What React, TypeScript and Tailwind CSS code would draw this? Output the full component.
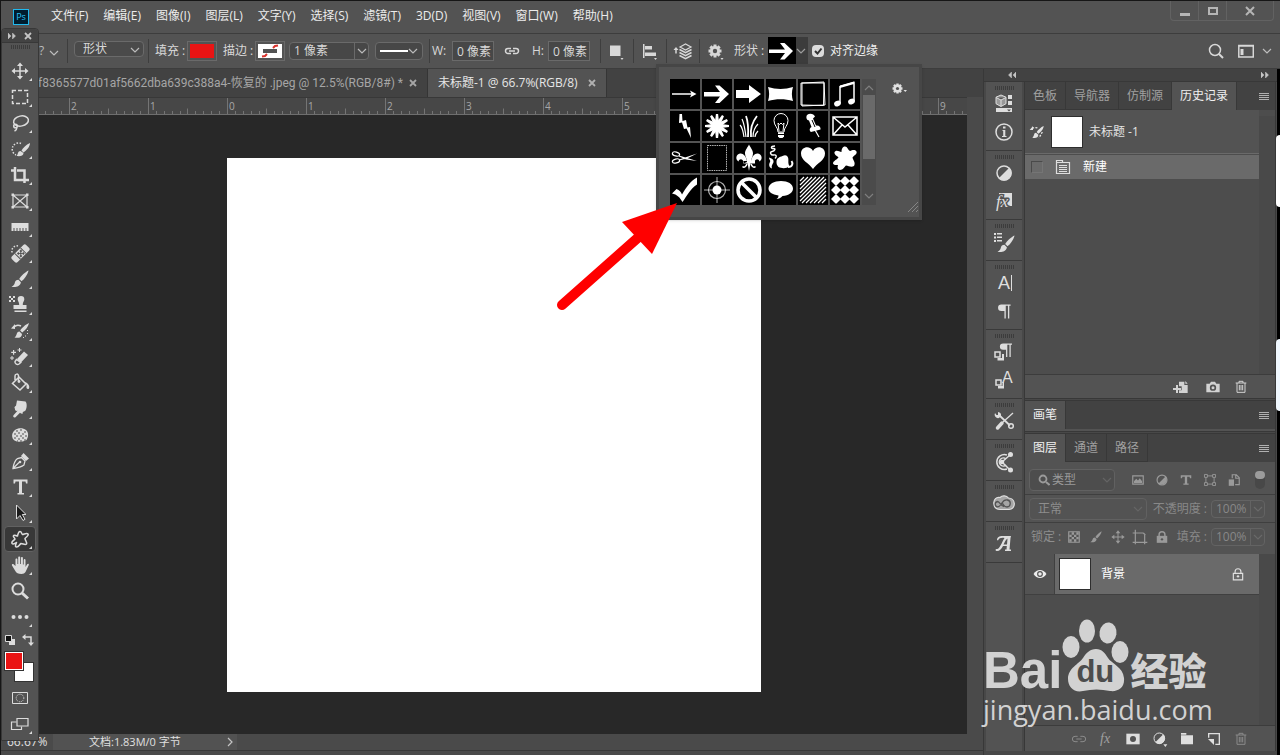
import { useState } from "react";
import type { ReactNode } from "react";

type IconProps = {
  children: ReactNode;
  size?: string;
  box?: string;
  className?: string;
};

const Icon = ({ children, size = "w-6 h-6", box = "0 0 24 24", className = "" }: IconProps) => (
  <svg viewBox={box} className={`${size} shrink-0 ${className}`} fill="currentColor" stroke="none" aria-hidden="true">
    {children}
  </svg>
);

const line = { fill: "none", stroke: "currentColor", strokeWidth: 1.5 };

const Chevron = ({ className = "" }: { className?: string }) => (
  <Icon size="w-2.5 h-2.5" box="0 0 10 10" className={className}>
    <path d="M1 3l4 4 4-4" {...line} strokeWidth={1.2} opacity=".8" />
  </Icon>
);

const Brush = () => (
  <>
    <path d="M20.500 3.500c-3 1.200-7.500 5.500-9.300 8.500l2.300 2.300c3-2.300 6.500-7.300 7-10.800z" />
    <path d="M10.400 12.800c-2 0-3.200 1.200-3.600 3-.3 1.600-1.300 3-3.300 4 3.500.6 8.800.2 9.400-4.500z" />
  </>
);

const Pilcrow = () => <path d="M9 4h11v1.500h-1.500V20H17V5.500h-2.500V20H13v-8.500H9.500a3.700 3.700 0 010-7.500z" />;

const Trash = () => <path d="M4 6h16M9 6V3.500h6V6M6 6v14h12V6M9.500 9v8M12 9v8M14.500 9v8" {...line} />;

const MENUS = [
  "文件(F)",
  "编辑(E)",
  "图像(I)",
  "图层(L)",
  "文字(Y)",
  "选择(S)",
  "滤镜(T)",
  "3D(D)",
  "视图(V)",
  "窗口(W)",
  "帮助(H)",
];

const TOOLS: { name: string; icon: ReactNode; plain?: boolean }[] = [
  {
    name: "Move",
    icon: (
      <>
        <path d="M12 6v12M6 12h12" {...line} />
        <path d="M12 3.500l3 3.500H9zM12 20.500l3-3.500H9zM3.500 12L7 9v6zM20.500 12L17 9v6z" />
      </>
    ),
  },
  { name: "Marquee", icon: <path d="M4.500 6v-.500h15v13h-15z" {...line} strokeDasharray="4 2" /> },
  {
    name: "Lasso",
    icon: (
      <>
        <ellipse cx="13" cy="10" rx="7.500" ry="5" {...line} transform="rotate(-12 13 10)" />
        <circle cx="7.500" cy="15" r="1.800" {...line} />
        <path d="M8.500 16.500c.5 1.500-.5 3-2 3.500" {...line} />
      </>
    ),
  },
  {
    name: "Quick selection",
    icon: (
      <>
        <path d="M13 6.500A6 6 0 108 18" {...line} strokeDasharray="1.500 1.500" />
        <path d="M22 6c-4 1.500-7 5-8.500 7.500l2 2C19 13 22 9.500 22 6zM12.500 14c-3 0-2 3-4 5 3.500.5 7 0 7-3z" />
      </>
    ),
  },
  { name: "Crop", icon: <path d="M7 4v13h11M3 7.500h3M9 7.500h7.500V20M18 17h3" {...line} strokeWidth={2.5} /> },
  {
    name: "Frame",
    icon: (
      <>
        <path d="M5 6h14v12H5zM5 6l14 12M19 6L5 18" {...line} strokeWidth={1.200} />
        <path d="M3.500 4.500h2.500V7H3.500zM18 4.500h2.500V7H18zM3.500 17h2.500v2.500H3.500zM18 17h2.500v2.500H18z" />
      </>
    ),
  },
  { name: "Ruler", icon: <path d="M3.500 8h17v8h-2v-3h-1v3h-2v-3h-1v3h-2v-3h-1v3h-2v-3h-1v3h-2v-3h-1v3h-2z" /> },
  {
    name: "Spot healing",
    icon: (
      <>
        <path d="M10 5a5 5 0 00-6 6v2" {...line} strokeDasharray="1.500 1.500" />
        <g transform="rotate(-45 12.500 12.500)">
          <rect x="2.500" y="8.500" width="20" height="8" rx="2" />
          <path d="M8.500 8.500v8M16.500 8.500v8" stroke="#535353" />
          <path d="M10 10h2v2h-2zM13.500 10h2v2h-2zM11.700 11.700h2v2h-2zM10 13.500h2v2h-2zM13.500 13.500h2v2h-2z" fill="#535353" />
        </g>
      </>
    ),
  },
  { name: "Brush", icon: <Brush /> },
  {
    name: "Clone stamp",
    icon: (
      <>
        <path d="M1 3h2v2H1zM5 3h2v2H5zM3 5h2v2H3zM1 7h2v2H1zM5 7h2v2H5z" />
        <path d="M13 3a3.300 3.300 0 013.300 3.300c0 2-1.500 2.500-1.500 5.700h3.700v4h-13v-4h5.700c0-3.200-1.500-3.700-1.500-5.700A3.300 3.300 0 0113 3zM6.500 17.500h12V19h-12z" />
      </>
    ),
  },
  {
    name: "History brush",
    icon: (
      <>
        <path d="M21 4c-3.500 1.500-7.300 5-8.800 7.500l2 2C17.500 11 20.500 7.500 21 4zM11.500 12.500c-3.500 0-2 4-5 6 4 1 7.500 0 7.500-3.500z" />
        <path d="M6 8c2-2 5-2 7-1" {...line} />
        <path d="M3 9.500L7 5v5zM19 11h1v1h-1zM19 14h1v1h-1zM17 16.500h1v1h-1zM15 18h1v1h-1z" />
      </>
    ),
  },
  {
    name: "Eraser",
    icon: (
      <>
        <path d="M9 14l7-7.500 4 3.500-7.500 8z" />
        <path d="M8.500 14.500l-1.500 2c-.5 2.500 2.500 3.500 4 2.500l1.700-1.500z" {...line} />
        <path d="M5 5h1.200v1.800H8V8H6.200v1.800H5V8H3.200V6.800H5zM11 3h1v1.500h1.500v1H12V7h-1V5.500H9.500v-1H11zM3.500 11h1v1.500H6v1H4.500V15h-1v-1.500H2v-1h1.500z" />
      </>
    ),
  },
  {
    name: "Paint bucket",
    icon: (
      <>
        <path d="M11 6l7 7-6 6-7.500-6.500zM10.500 10V5c0-3-3.500-2-3.500 0v4" {...line} />
        <circle cx="11" cy="10.500" r="1.400" />
        <path d="M17 11c3.500 1 5 4.500 4 6.500-1.500 1.500-3-.5-2.500-2 .4-1.500-.5-3-1.500-4.500z" />
      </>
    ),
  },
  {
    name: "Smudge",
    icon: (
      <path d="M9 3.500l8.500 1c1.500 1.500 1.700 6 0 9-1 1-2 .8-3 1.800 1.500 1.500-1 2-2.500.5l-4.500 4.500c-1.500 1-3-.5-2-2l4-4.500c-1.500.5-3-.5-2.500-2-1.300-1 0-2.500 1-3z" />
    ),
  },
  {
    name: "Sponge",
    icon: (
      <>
        <path d="M7 7c3-2.500 8-2.500 11 0s2.500 7 .5 10c-3 2-9 2.500-12 .500s-3.500-7.500.5-10.500z" />
        <path d="M8 8h2M12 7h2M16 9h2M6 11h2M10 10h2M14 11h2M8 13h2M12 13h2M17 13h2M6 15h2M10 16h2M14 15h2M16 17h2M9 18h1M12 18h2" {...line} stroke="#535353" strokeWidth={1} />
      </>
    ),
  },
  {
    name: "Pen",
    icon: (
      <>
        <path d="M5 19.500c.5-4 2-8 4.500-10l4-1 3.500 3.500-1 4c-2.500 2-7 3-11 3.500zM5 19.500l6-6" {...line} strokeWidth={1.300} />
        <circle cx="12" cy="13" r="1.300" />
        <path d="M13 7l2.500-3 5.500 5.500-3 2.500z" />
      </>
    ),
  },
  { name: "Type", icon: <path d="M5.500 4.500h14v4H18l-.5-2h-3.500v11.500h2V19.500H9.500V18H11V6.500H7.500l-.5 2H5.500z" /> },
  { name: "Path selection", icon: <path d="M8.500 4v14l3.500-3.500 3 5 2-1.200-2.700-4.800H18z" fill="#1b1b1b" stroke="currentColor" strokeWidth="1" /> },
  {
    name: "Custom shape",
    icon: (
      <path
        d="M9.500 9c.5-2 .8-4.500 2.500-4.500S13.500 7 14.500 7.500c1.500 0 4-2 5.500-.5 1.200 1.500-2 3-3 4.500 0 2 2.300 3.500 1.500 5.500-1.500 1.500-3.500-.5-5.500-.5-1.500.8-2 3.500-4.500 3.500-2 0-.5-3 0-4.500-.8 0-3 2.500-4.500 1-1-2 2-3 3-4.500-.5-1.500-2.300-2-1.500-3.500 1-1 2.500.5 4 .5z"
        {...line}
        strokeLinejoin="round"
      />
    ),
  },
  {
    name: "Hand",
    icon: (
      <path d="M7.500 13V6.500c0-1.300 1.900-1.300 1.900 0V11h.8V4.500c0-1.300 2-1.300 2 0V11h.8V5c0-1.300 1.900-1.300 1.900 0v6.500h.8V7c0-1.200 1.800-1.200 1.800 0v7l1.500-2.500c1-1.300 2.300-.5 1.700.8L17.500 19c-.8 1.300-2 2-4 2-3.500 0-5-.8-6.500-3.500L4 12.500c-.6-1.300.8-2 1.800-1z" />
    ),
  },
  {
    name: "Zoom",
    plain: true,
    icon: (
      <>
        <circle cx="10" cy="10" r="5.500" {...line} strokeWidth={2} />
        <path d="M14 14l6 5.500" {...line} strokeWidth={3} />
      </>
    ),
  },
  {
    name: "More tools",
    icon: (
      <>
        <circle cx="5.500" cy="12" r="2" />
        <circle cx="12" cy="12" r="2" />
        <circle cx="18.500" cy="12" r="2" />
      </>
    ),
  },
];

const w = { fill: "none", stroke: "#fff", strokeWidth: 1.5 };
const BURST = [0, 30, 60, 90, 120, 150, 180, 210, 240, 270, 300, 330];

// Custom shape presets, each drawn on a 30x30 cell
const SHAPES: { name: string; icon: ReactNode }[] = [
  {
    name: "Arrow 1",
    icon: (
      <>
        <path d="M2 15h20" {...w} />
        <path d="M20 11.500l6.500 3.500-6.500 3.500 1.500-3.500z" />
      </>
    ),
  },
  { name: "Arrow 2", icon: <path d="M2 13h16l-5-6.500h4.500L27 15l-9.500 9H13l5-6.500H2z" /> },
  { name: "Arrow 3", icon: <path d="M2 11h13V6l12 9-12 9v-5H2z" /> },
  { name: "Banner", icon: <path d="M2 8c8 2.500 17 2.500 25 0-1.500 4.500-1.500 9.500 0 14-8-2.500-17-2.500-25 0 1.500-4.500 1.500-9.500 0-14z" /> },
  { name: "Frame", icon: <path d="M4 4l22-1 1 23-23 1zM3 4h23l-.5 22.500L3 26z" {...w} strokeWidth={1} /> },
  {
    name: "Music",
    icon: (
      <>
        <path d="M10 24V7.500L24 3.500V22" {...w} />
        <path d="M10 6.500l14-4v2.500l-14 4z" />
        <ellipse cx="7.500" cy="24.500" rx="3.500" ry="2.700" transform="rotate(-25 7.500 24.500)" />
        <ellipse cx="21.500" cy="22.500" rx="3.500" ry="2.700" transform="rotate(-25 21.500 22.500)" />
      </>
    ),
  },
  { name: "Lightning", icon: <path d="M9.500 3l2.500 0 .5 7 3.500-1 1.500 7.500 2.500-.5 1 11-4.500-9.500-2.500.5-2-6.500-3 .5z" /> },
  {
    name: "Starburst",
    icon: (
      <>
        <circle cx="15" cy="15" r="5.500" />
        {BURST.map((a) => (
          <path key={a} d="M13 11L13.900 3h2.200l.9 8z" transform={`rotate(${a} 15 15)`} />
        ))}
      </>
    ),
  },
  {
    name: "Grass",
    icon: (
      <>
        <path d="M12 26C11 18 10 12 8 8M10 26c-1-7-2-10-4-12M19 26c0-6 2-10 5-13M21 26c0-3 1-4 3-6" {...w} strokeWidth={1.200} />
        <path d="M14 26c.5-9-.5-17-2-21M17 26c-1-9 2-16 6-21" {...w} strokeWidth={1.800} />
      </>
    ),
  },
  {
    name: "Light bulb",
    icon: (
      <>
        <path d="M12 21c0-5-4-6-4-11.500a7 7 0 0114 0C22 15 18 16 18 21zM13 20l-1-8 1.500 1.500L15 12l1.500 1.500L18 12l-1 8" {...w} strokeWidth={1} />
        <path d="M12 21.500h6v4l-1.500 1.500h-3L12 25.500z" />
        <path d="M12 23.500h6" stroke="#000" />
      </>
    ),
  },
  {
    name: "Push pin",
    icon: (
      <>
        <path d="M9 4c3-2.500 7-1 8 1.500l-2 2 3 7c3-.5 5 1.500 4.500 4L13 21c-2-1.500-1.500-4 .500-5L11 9.500c-2 0-3.500-3-2-5.500z" />
        <path d="M17 19l4 7" {...w} strokeWidth={1.200} />
        <path d="M14 9l3 7" stroke="#000" />
      </>
    ),
  },
  { name: "Envelope", icon: <path d="M3 6h24v18H3zM3 6l12 10L27 6M3 24l9-10M27 24l-9-10" {...w} /> },
  {
    name: "Scissors",
    icon: (
      <>
        <ellipse cx="6" cy="11" rx="3.700" ry="2" {...w} strokeWidth={1.200} transform="rotate(15 6 11)" />
        <ellipse cx="6" cy="18" rx="3.700" ry="2" {...w} strokeWidth={1.200} transform="rotate(-15 6 18)" />
        <path d="M9 12.500l18 5.500-11-1.500-7-3zM9 16.500L27 10.500l-10 5-8 2z" />
      </>
    ),
  },
  { name: "Stamp", icon: <path d="M5.500 2.500h19v25h-19z" {...w} strokeWidth={1} strokeDasharray="1.500 .8" opacity=".7" /> },
  {
    name: "Fleur-de-lis",
    icon: (
      <>
        <path d="M15 1.500c2 4 4 5.500 4 9 0 3-2 5-2 8h-4c0-3-2-5-2-8 0-3.500 2-5 4-9z" />
        <path d="M13 19c0-4-3-9-7-8.500-4 .5-5 6-1.500 8 .5-2 2.500-3 4-1.500 1 1 1 2 1 3.500zM17 19c0-4 3-9 7-8.500 4 .5 5 6 1.500 8-.5-2-2.500-3-4-1.500-1 1-1 2-1 3.500zM9 18h12v2.500H9zM13.500 20h3l-1.500 8z" />
        <path d="M13 21c-1 3-3 4-4.500 2.500M17 21c1 3 3 4 4.500 2.500" {...w} />
      </>
    ),
  },
  {
    name: "Ornament",
    icon: (
      <>
        <path d="M10.500 19c0-4 3-5 6-6 2.500-1.500 4.500-1 5.500 1.500 1 3-.5 5.500 1.500 8.500-3 3-8 2.500-11 1-1.500-1.500-2-3-2-5z" />
        <path d="M9 3C4 3 5 6 7.500 5.500S9 8 6 8.500s-1 4 1.500 3.500 4 1 1.500 3.500" {...w} strokeWidth={1.400} />
        <path d="M22 24c5 0 5-4 3.500-6" {...w} strokeWidth={2} />
        <path d="M3 14.500c3 1 5 2 4.500 4.500-.3 2-2.500 3-1.500 6.500-3-1-3.500-4-2-6.500 1-1.500-1-2.500-1-4.500z" />
      </>
    ),
  },
  { name: "Heart", icon: <path d="M15 26C11 20 3 17.500 3 10.500 3 3.500 12 2 15 8c3-6 12-4.500 12 2.500 0 7-8 9.500-12 15.500z" /> },
  {
    name: "Blob",
    icon: (
      <path d="M11.500 9c0-3 1-5.500 3.500-5.500S18 7 20 8c2-.5 4.500-2 6.500.5 1 3-2.500 3.500-4 6 .5 3 3.500 5 1.500 8.500-3 2-5.500-.5-8-.500-1.500 1.500-3 4.500-6 4.500-3-.5-2.500-3-2-5-2 0-4 .5-5-1.500C3 18 6.500 17 8.500 14.500 7 12.500 4 12 4.500 9c2-2.500 4.500-.5 7 0z" />
    ),
  },
  { name: "Checkmark", icon: <path d="M2 18.500l4.500-4.500c3 1 4.500 3 5.500 5.500C16 13 20 6 27 2.500v7C20 14 17 21 12.500 27 10 22.500 7 19.500 2 18.500z" /> },
  {
    name: "Target",
    icon: (
      <>
        <circle cx="15" cy="15" r="8.500" {...w} strokeWidth={1.200} opacity=".7" />
        <circle cx="15" cy="15" r="4.500" />
        <path d="M15 2v26M2 15h26" {...w} strokeWidth={1} opacity=".7" />
      </>
    ),
  },
  {
    name: "No symbol",
    icon: (
      <>
        <circle cx="15" cy="15" r="11" {...w} strokeWidth={3.500} />
        <path d="M7.500 7.500l15 15" {...w} strokeWidth={3.500} />
      </>
    ),
  },
  { name: "Talk bubble", icon: <path d="M15 6c7 0 12 3 12 7.500 0 4-4 7-10.500 7.500-1.500 2-4 3-6 3 1.500-1 2-2 2-3.500C6 19.500 2.500 17 2.500 13.500 2.500 9 8 6 15 6z" /> },
  {
    name: "Diagonal lines",
    icon: (
      <path d="M2 6l4-4M2 10l8-8M2 14L14 2M2 18L18 2M2 22L22 2M2 26L26 2M4 28L28 4M8 28L28 8M12 28l16-16M16 28l12-12M20 28l8-8M24 28l4-4" {...w} strokeWidth={1.200} />
    ),
  },
  {
    name: "Diamond tiles",
    icon: (
      <>
        {[6, 15, 24].map((y) =>
          [6, 15, 24].map((x) => (
            <path key={`${x}-${y}`} d="M-4.500-.5L-.5-4.500h1L4.500-.5v1L.5 4.500h-1L-4.500.5z" transform={`translate(${x} ${y})`} />
          ))
        )}
      </>
    ),
  },
];

const DOCK: { name: string; icon: ReactNode }[][] = [
  [
    {
      name: "Libraries",
      icon: (
        <>
          <path d="M9 3l5 2.200v6.500L9 14.500l-5-2.800V5.200zM4 5.500l5 2.500 5-2.500M9 8v6" fill="#999" stroke="currentColor" strokeWidth="1" />
          <path d="M16 3h4v4h-4zM16 9h4v4h-4zM4 16h16v4H4z" />
          <path d="M15 17.500h4l-2 2z" fill="#535353" />
        </>
      ),
    },
    {
      name: "Info",
      icon: (
        <>
          <circle cx="12" cy="12" r="8" {...line} />
          <path d="M10.500 10h2.800v6h1.200v1h-4.500v-1h1.200v-5h-.7zM11 6.500h2.500v2H11z" />
        </>
      ),
    },
  ],
  [
    {
      name: "Adjustments",
      icon: (
        <>
          <circle cx="12" cy="12" r="7" {...line} />
          <path d="M17.500 6.500a7.700 7.700 0 01-11 11z" />
        </>
      ),
    },
    {
      name: "Styles",
      icon: (
        <>
          <path d="M7 4h13v13H7z" />
          <text
            x="4"
            y="18"
            fontSize="17"
            fontStyle="italic"
            fontFamily="Liberation Serif, serif"
            stroke="#535353"
            strokeWidth="3"
            paintOrder="stroke"
          >
            fx
          </text>
        </>
      ),
    },
  ],
  [
    {
      name: "Brush settings",
      icon: (
        <>
          <path d="M2 3h2v2H2zM5 3h5v1.500H5zM2 6.500h2v2H2zM5 6.500h5V8H5zM2 10h2v2H2zM5 10h5v1.500H5z" />
          <g transform="translate(2 2)">
            <Brush />
          </g>
        </>
      ),
    },
  ],
  [
    {
      name: "Character",
      icon: (
        <>
          <text x="6" y="18" fontSize="18" fontFamily="Liberation Sans, sans-serif">
            A
          </text>
          <path d="M19.500 4v16" {...line} strokeWidth={1} />
        </>
      ),
    },
    {
      name: "Paragraph",
      icon: (
        <g transform="translate(1 2) scale(.88)">
          <Pilcrow />
        </g>
      ),
    },
  ],
  [
    {
      name: "Paragraph styles",
      icon: (
        <>
          <g transform="translate(3 0) scale(.85)">
            <Pilcrow />
          </g>
          <path d="M3 12h5v5H3z" {...line} />
          <path d="M10 14h2v6.500H5.500V18H10z" />
        </>
      ),
    },
    {
      name: "Character styles",
      icon: (
        <>
          <text x="10" y="15" fontSize="16" fontFamily="Liberation Sans, sans-serif">
            A
          </text>
          <path d="M4 12h5v5H4z" {...line} />
          <path d="M10.500 14h1.500v6.500H6V18h4.500z" />
        </>
      ),
    },
  ],
  [
    {
      name: "Tool presets",
      icon: (
        <>
          <path d="M8 7l10 9.500" {...line} strokeWidth={1.800} />
          <path d="M21 4l-10 9" {...line} strokeWidth={1.300} />
          <path d="M10 14L5.500 19" {...line} strokeWidth={3.500} strokeLinecap="round" />
          <path d="M3 4a3.500 3.500 0 004 5l2-2a3.500 3.500 0 00-3-4v3L4.500 6z" />
          <circle cx="19" cy="17" r="2.300" {...line} />
        </>
      ),
    },
  ],
  [
    {
      name: "3D",
      icon: (
        <>
          <path d="M15 5a7.500 7.500 0 100 14M14 9a4 4 0 100 6" {...line} />
          <path d="M10 12l8-7M10 12l8 8" {...line} />
          <circle cx="10" cy="12" r="2.300" />
          <circle cx="18.500" cy="4.500" r="2.500" />
          <circle cx="18.500" cy="20" r="2.500" />
        </>
      ),
    },
  ],
  [
    {
      name: "Creative Cloud",
      icon: (
        <>
          <path d="M8 6.500C4.500 5.500 1.500 8.500 1.800 12.500c.3 4 3 6 6.200 6h9c3.500 0 5.500-3 5.300-6-.3-3.500-3-5.500-5.800-5.500C14.500 4.500 10.500 4 8 6.500z" fill="#a5a5a5" stroke="currentColor" strokeWidth="1.200" />
          <path d="M12 15.500c-3 0-4-5-6.500-5-3 .5-3 5 0 5.300 2.500 0 3-1.800 4.500-3.800 1.500-2.500 3.500-3.500 5.500-3 4 1 3.500 6.700-.5 7-2.500 0-3-1.500-4.500-3.500" fill="none" stroke="#535353" strokeWidth="1.300" />
        </>
      ),
    },
  ],
  [
    {
      name: "Glyphs",
      icon: (
        <path d="M5 8c0-3 3-4.300 6-4h8l-.5 2-1 11.500H19V19h-6v-1.500h1.500l.3-3.500H11c-1.500 3-3.500 5.300-6.500 5-1.800-.7-.8-2.500.5-2 2.500.3 4.500-6 7.500-11C9.500 5.500 7 6 6 8.500zM11.500 12.500h3.500l.5-6c-2 1.500-3 4-4 6z" />
      ),
    },
  ],
];

const Divider = () => <div className="w-px h-6 bg-[#3e3e3e] shrink-0" />;

const Grip = () => (
  <div className="flex justify-center gap-px">
    {Array.from({ length: 10 }, (_, i) => (
      <span key={i} className="w-px h-1 bg-[#3c3c3c]" />
    ))}
  </div>
);

const PanelMenu = ({ label }: { label: string }) => (
  <button aria-label={label} className="ml-auto mr-1.5 flex flex-col gap-px self-center">
    {[0, 1, 2, 3].map((i) => (
      <span key={i} className="w-2.5 h-px bg-[#b0b0b0]" />
    ))}
  </button>
);

function MenuBar() {
  return (
    <header className="h-8 flex items-center pl-3 shrink-0">
      <div className="w-4 h-4 border border-[#21b9ee] bg-[#001d2e] text-[#2cc3f5] text-[9px] leading-3.5 text-center">Ps</div>
      <nav className="flex gap-[15px] ml-[22px] -mt-0.5 text-[#ececec]">
        {MENUS.map((m) => (
          <button key={m}>{m}</button>
        ))}
      </nav>
      <div className="ml-auto mr-1.5 self-start flex border border-t-0 border-[#626262] rounded-b h-5 text-[#b5b5b5] divide-x divide-[#626262]">
        <button aria-label="Minimize" className="w-7 flex items-center justify-center">
          <span className="w-2.5 h-[3px] mt-2 bg-[#b5b5b5]" />
        </button>
        <button aria-label="Maximize" className="w-7 flex items-center justify-center">
          <span className="w-2.5 h-2 border-2 border-[#b5b5b5]" />
        </button>
        <button aria-label="Close" className="w-11.5 flex items-center justify-center">
          <Icon size="w-3 h-3" box="0 0 12 12">
            <path d="M2 2l8 8M10 2l-8 8" {...line} strokeWidth={2} />
          </Icon>
        </button>
      </div>
    </header>
  );
}

function OptionsBar() {
  const [mode, setMode] = useState("形状");
  const [align, setAlign] = useState(true);

  return (
    <div className="h-9 flex items-center pl-[38px] border-y border-[#3d3d3d] shrink-0 text-[#d8d8d8] whitespace-nowrap">
      <span className="w-2 text-[#bbb]">?</span>
      <Chevron className="ml-0.5 mr-2 mt-1" />
      <Divider />
      <div className="relative ml-1.5 mr-1 w-17.5 -mt-1">
        <select
          aria-label="Tool mode"
          value={mode}
          onChange={(e) => setMode(e.target.value)}
          className="appearance-none w-full h-4 pl-2 leading-3.5 border border-[#6a6a6a] rounded-sm bg-[#4a4a4a]"
        >
          <option>形状</option>
          <option>路径</option>
          <option>像素</option>
        </select>
        <Chevron className="absolute right-1 top-1 pointer-events-none" />
      </div>
      <Divider />
      <span className="ml-1.5 w-8">填充 :</span>
      <button aria-label="填充" className="w-7.5 h-5 border border-[#6a6a6a] p-0.5">
        <span className="block w-full h-full bg-[#ea1414]" />
      </button>
      <span className="ml-1.5 w-8">描边 :</span>
      <button aria-label="描边" className="w-7.5 h-5 border border-[#6a6a6a] p-0.5">
        <Icon size="w-6 h-3.5" box="0 0 24 14">
          <path d="M0 0h24v14H0z" fill="#fff" />
          <path d="M4 12.500l3-.5 2-2M15 4l2-2 3-.5" fill="none" stroke="#d9322c" strokeWidth="2" />
          <path d="M5 5h14v4H5z" fill="#535353" />
        </Icon>
      </button>
      <div className="ml-1 flex h-4.5 border border-[#6a6a6a] rounded-sm bg-[#474747]">
        <input aria-label="描边宽度" defaultValue="1 像素" className="w-16 pl-1 outline-none" />
        <button aria-label="Stroke presets" className="w-3.5 border-l border-[#6a6a6a] flex items-center justify-center">
          <Chevron />
        </button>
      </div>
      <button aria-label="Stroke type" className="mx-1.5 w-12 h-4.5 px-1 border border-[#6a6a6a] rounded-sm bg-[#474747] flex items-center justify-between">
        <span className="w-7 h-0.5 bg-white" />
        <Chevron />
      </button>
      <Divider />
      <label className="flex items-center ml-0.5">
        <span className="w-5">W:</span>
        <input defaultValue="0 像素" className="w-10.5 h-5 pl-1 border border-[#6a6a6a] bg-[#474747] outline-none" />
      </label>
      <button aria-label="Link dimensions" className="ml-2.5 mr-3">
        <Icon size="w-4 h-4" box="0 0 16 16">
          <path d="M7 5.500H4a2.500 2.500 0 000 5h3M9 5.500h3a2.500 2.500 0 010 5H9M5 8h6" {...line} />
        </Icon>
      </button>
      <label className="flex items-center">
        <span className="w-4">H:</span>
        <input defaultValue="0 像素" className="w-10.5 h-5 pl-1 border border-[#6a6a6a] bg-[#474747] outline-none" />
      </label>
      <div className="w-2.5" />
      <Divider />
      <button aria-label="Path operations" className="w-8 flex justify-center">
        <Icon size="w-5 h-5" box="0 0 20 20">
          <path d="M3 4.500h10.500V15H3zM13.500 17h3L15 19z" />
        </Icon>
      </button>
      <Divider />
      <button aria-label="Path alignment" className="w-8 flex justify-center">
        <Icon size="w-5 h-5" box="0 0 20 20">
          <path d="M3 3h1.500v14H3zM5 5h7v3.500H5zM5 11.500h11V15H5zM14 17h3l-1.500 2z" />
        </Icon>
      </button>
      <Divider />
      <button aria-label="Path arrangement" className="w-8 flex justify-center">
        <Icon size="w-5 h-5" box="0 0 20 20">
          <path d="M7 6l5.500-3L18 6l-5.500 3z" {...line} strokeWidth={1.200} />
          <path d="M6.500 8.500l6 3.200 6-3.200M6.500 11.500l6 3.200 6-3.200M6.500 14.500l6 3.200 6-3.200M3 12.500V8" {...line} />
          <path d="M3 6l2.500 3h-5z" />
        </Icon>
      </button>
      <Divider />
      <button aria-label="Path options" className="w-8 flex justify-center">
        <Gear />
      </button>
      <span className="ml-0.5 w-8.5">形状 :</span>
      <button aria-label="选择形状" className="flex h-7 bg-black text-white">
        <Icon size="w-7 h-7" box="0 0 28 28">
          <path d="M1 12.500h16L12 6h4.500L25 14l-8.500 8.500H12l5-6.500H1z" />
        </Icon>
        <span className="w-3 h-7 bg-[#3c3c3c] text-[#b5b5b5] flex items-center">
          <Chevron />
        </span>
      </button>
      <label className="ml-1 flex items-center gap-1.5 text-[#f0f0f0]">
        <span className="relative flex w-3 h-3">
          <input type="checkbox" checked={align} onChange={() => setAlign(!align)} className="appearance-none w-3 h-3 rounded-sm bg-[#dcdcdc]" />
          {align && (
            <Icon size="w-3 h-3" box="0 0 12 12" className="absolute inset-0 text-[#333] pointer-events-none">
              <path d="M3 6l2.500 2.500L9.500 3.500" {...line} strokeWidth={2} />
            </Icon>
          )}
        </span>
        对齐边缘
      </label>
      <div className="ml-auto mr-2 flex items-center">
        <button aria-label="Search">
          <Icon size="w-4 h-4" box="0 0 16 16">
            <circle cx="7" cy="7" r="5.500" {...line} />
            <path d="M11 11l4 4" {...line} strokeWidth={2} />
          </Icon>
        </button>
        <button aria-label="Workspace" className="ml-3.5 flex items-center gap-2">
          <Icon size="w-4 h-4" box="0 0 16 16">
            <path d="M.8 2.500h14.500v11.500H.8zM.8 3h14.500" {...line} />
            <path d="M2.500 6h3v6h-3z" />
          </Icon>
          <Chevron />
        </button>
      </div>
    </div>
  );
}

const Gear = () => (
  <Icon size="w-5 h-5" box="0 0 20 20">
    {[0, 45, 90, 135].map((a) => (
      <path key={a} d="M7.500 3.500h3v13h-3z" transform={`rotate(${a} 9 10)`} />
    ))}
    <circle cx="9" cy="10" r="5" />
    <circle cx="9" cy="10" r="2.200" fill="#535353" />
    <path d="M14.500 17h3L16 19z" />
  </Icon>
);

function ShapePicker() {
  return (
    <div className="absolute left-[655px] top-[63px] border-3 border-[#464646] bg-[#535353] flex pl-[11px] py-3 w-[266px] shadow">
      <div className="grid grid-cols-6 gap-0.5 shrink-0">
        {SHAPES.map((s) => (
          <button key={s.name} aria-label={s.name} className="w-7.5 h-7.5 bg-black text-white">
            <Icon size="w-7.5 h-7.5" box="0 0 30 30">
              {s.icon}
            </Icon>
          </button>
        ))}
      </div>
      <div className="ml-0.5 w-3.5 shrink-0 bg-[#4b4b4b] flex flex-col items-center py-1 text-[#8c8c8c]">
        <Chevron className="rotate-180" />
        <div className="w-3 h-16 mt-0.5 bg-[#6a6a6a]" />
        <Chevron className="mt-auto" />
      </div>
      <div className="flex-1 flex flex-col justify-between -mb-2">
        <button aria-label="Shape options" className="ml-3.5 self-start text-[#e0e0e0]">
          <Icon size="w-5 h-5" box="0 0 20 20">
            {[0, 45, 90, 135].map((a) => (
              <path key={a} d="M6.300 4.500h2.400v10H6.300z" transform={`rotate(${a} 7.500 9.500)`} />
            ))}
            <circle cx="7.500" cy="9.500" r="4" />
            <circle cx="7.500" cy="9.500" r="1.600" fill="#535353" />
            <path d="M13.500 11h3.500l-1.700 2z" />
          </Icon>
        </button>
        <Icon size="w-3 h-3" box="0 0 12 12" className="self-end text-[#858585]">
          <path d="M1 11L11 1M5 11l6-6M9 11l2-2" {...line} strokeWidth={1} />
        </Icon>
      </div>
    </div>
  );
}

function ToolBar() {
  const [active, setActive] = useState("Custom shape");

  return (
    <aside className="absolute left-0 top-[27px] w-9.5 h-[713px] bg-[#535353] border border-[#383838] rounded-t text-[#dcdcdc] flex flex-col">
      <div className="h-3.5 shrink-0 bg-[#434343] border-b border-[#383838] flex items-center justify-between px-1.5 text-[#c4c4c4] rounded-t">
        <DoubleChevron />
        <CloseX />
      </div>
      <div className="h-[15px] pt-0.5 shrink-0">
        <Grip />
      </div>
      {TOOLS.map((t) => (
        <button
          key={t.name}
          aria-label={t.name}
          onClick={() => setActive(t.name)}
          className={`relative mx-0.5 h-6.5 shrink-0 flex items-center justify-center rounded-sm border ${
            active === t.name ? "bg-[#383838] border-[#616161]" : "border-transparent"
          }`}
        >
          <Icon size="w-6 h-6">{t.icon}</Icon>
          {!t.plain && (
            <Icon size="w-[3px] h-[3px]" box="0 0 4 4" className="absolute right-[3px] bottom-0.5">
              <path d="M4 0v4H0z" />
            </Icon>
          )}
        </button>
      ))}
      <div className="flex justify-between pl-[3px] pr-1 h-5 items-center shrink-0">
        <button aria-label="Default colors">
          <Icon size="w-2.5 h-2.5" box="0 0 10 10">
            <path d="M4 4h6v6H4z" />
            <path d="M.500.500h6v6h-6z" fill="#111" stroke="currentColor" />
          </Icon>
        </button>
        <button aria-label="Swap colors">
          <Icon size="w-3 h-3" box="0 0 12 12">
            <path d="M3 3h6v6" {...line} />
            <path d="M0 3l3.500-3v6zM9 12L6 8.500h6z" />
          </Icon>
        </button>
      </div>
      <div className="relative h-9 shrink-0">
        <span className="absolute left-3 top-3 w-5 h-5 bg-white border border-[#333]" />
        <span className="absolute left-[3px] top-0.5 w-4.5 h-4.5 bg-[#ea1414] border border-white outline outline-[#333]" />
      </div>
      <button aria-label="Quick mask" className="h-6 flex items-center justify-center shrink-0">
        <Icon size="w-5 h-5" box="0 0 20 20">
          <path d="M2.500 4.500h15v11h-15z" {...line} strokeWidth={1} />
          <circle cx="10" cy="10" r="3.800" {...line} strokeWidth={1} strokeDasharray="1 1" />
        </Icon>
      </button>
      <button aria-label="Screen mode" className="relative h-7 flex items-center justify-center shrink-0">
        <Icon size="w-5 h-5" box="0 0 20 20">
          <path d="M6.500 8h-5v7.500h10v-3" {...line} strokeWidth={1.200} />
          <path d="M7 4.500h11v7.500H7z" {...line} strokeWidth={1.200} />
        </Icon>
        <Icon size="w-[3px] h-[3px]" box="0 0 4 4" className="absolute right-1.5 bottom-1">
          <path d="M4 0v4H0z" />
        </Icon>
      </button>
    </aside>
  );
}

const DoubleChevron = ({ className = "" }: { className?: string }) => (
  <Icon size="w-2 h-2" box="0 0 8 8" className={className}>
    <path d="M0 1l3 3-3 3zM4.500 1l3 3-3 3z" stroke="currentColor" strokeWidth=".5" />
  </Icon>
);

function DocumentArea() {
  return (
    <main className="flex-1 min-w-0 flex flex-col bg-[#4a4a4a] border-r border-[#383838]">
      <div role="tablist" className="h-7 flex shrink-0 bg-[#424242] pl-[37px] text-[#a6a6a6]">
        <div className="flex items-center border-r border-[#353535] w-[390px]">
          <button role="tab" className="whitespace-nowrap font-['Roboto','Noto_Sans_CJK_SC',sans-serif]">
            f8365577d01af5662dba639c388a4-恢复的 .jpeg @ 12.5%(RGB/8#) *
          </button>
          <button aria-label="Close tab" className="ml-auto mr-2.5">
            <CloseX />
          </button>
        </div>
        <div className="flex items-center bg-[#535353] text-[#e6e6e6] px-2.5 border-r border-[#353535]">
          <button role="tab" aria-selected="true" className="whitespace-nowrap">
            未标题-1 @ 66.7%(RGB/8)
          </button>
          <button aria-label="Close tab" className="ml-2.5 text-[#b0b0b0]">
            <CloseX />
          </button>
        </div>
      </div>
      <div className="flex-1 min-h-0 flex">
        <div className="flex-1 min-w-0 flex flex-col">
          <div className="h-[18px] shrink-0 flex overflow-hidden border-t border-b border-t-[#383838] border-b-[#6e6e6e] bg-[#474747]">
            <div className="w-17 shrink-0 flex justify-end overflow-hidden">
              <RulerCell />
            </div>
            {[2, 1, 0, 1, 2, 3, 4, 5, 6, 7, 8, 9].map((n, i) => (
              <div key={i} className="flex shrink-0">
                <RulerCell label={n} />
              </div>
            ))}
          </div>
          <div className="flex-1 min-h-0 bg-[#282828] pl-[226px] pt-[43px] overflow-hidden">
            <div className="w-[534px] h-[534px] bg-white" />
          </div>
        </div>
        <div className="w-4 mt-px bg-[#4a4a4a]" />
      </div>
      <footer className="h-[17px] shrink-0 flex items-center bg-[#4a4a4a] text-[#e0e0e0] border-b border-[#383838] mb-1">
        <span className="w-[52px] pl-1.5">66.67%</span>
        <div className="w-[184px] h-full bg-[#525252] text-[11px] flex items-center justify-between pl-9 pr-0.5">
          文档:1.83M/0 字节
          <Chevron className="-rotate-90" />
        </div>
      </footer>
    </main>
  );
}

const CloseX = () => (
  <Icon size="w-2 h-2" box="0 0 8 8">
    <path d="M1 1l6 6M7 1L1 7" {...line} strokeWidth={1.800} />
  </Icon>
);

const RulerCell = ({ label }: { label?: number }) => (
  <svg viewBox="0 0 79 16" className="w-[79px] h-4 shrink-0" aria-hidden="true">
    <path
      d="M.5 0v16M8.500 13v3M16.500 13v3M24.500 13v3M32.500 13v3M39.500 10.500v6M47.500 13v3M55.500 13v3M63.500 13v3M71.500 13v3"
      stroke="#747474"
      fill="none"
    />
    {label !== undefined && (
      <text x="2" y="12" fontSize="10" fill="#a8a8a8">
        {label}
      </text>
    )}
  </svg>
);

function Dock() {
  return (
    <aside className="w-9 mx-0.5 shrink-0 flex flex-col bg-[#535353] text-[#dedede]">
      {DOCK.map((group, i) => (
        <div key={i} className="shrink-0 py-1 border-b border-[#3a3a3a]">
          <Grip />
          {group.map((d) => (
            <button key={d.name} aria-label={d.name} className="h-7 w-full flex items-center justify-center">
              <Icon size="w-6 h-6">{d.icon}</Icon>
            </button>
          ))}
        </div>
      ))}
    </aside>
  );
}

const Tabs = ({ tabs, active, menu }: { tabs: string[]; active: string; menu: string }) => (
  <div role="tablist" className="h-7 shrink-0 flex bg-[#424242]">
    {tabs.map((t) => (
      <button
        key={t}
        role="tab"
        aria-selected={t === active}
        className={`px-2 border-r border-[#383838] ${
          t === active ? "bg-[#535353] text-[#f0f0f0]" : "text-[#a0a0a0] border-b"
        }`}
      >
        {t}
      </button>
    ))}
    <PanelMenu label={menu} />
  </div>
);

function HistoryPanel() {
  return (
    <section className="h-[317px] shrink-0 flex flex-col bg-[#535353] border-b border-[#383838]">
      <Tabs tabs={["色板", "导航器", "仿制源", "历史记录"]} active="历史记录" menu="History menu" />
      <div className="flex-1 flex bg-[#4d4d4d]">
        <div className="flex-1 flex flex-col text-[#e4e4e4]">
          <div className="h-11 flex items-center pl-1 bg-[#535353] border-b border-[#6a6a6a]">
            <Icon size="w-4 h-4">
              <path d="M22 3c-4 1.500-8.500 6-10.500 9l2.500 2.500C18 12 22 7 22 3zM10.500 13c-4 0-2 5-5.500 7.500 5 1 9 0 9-4.500zM1 9l5-6v6z" />
              <path d="M5 7c2-2 5-2 8-1M20 12l-5 9" {...line} strokeWidth={2} strokeDasharray="3 2" />
            </Icon>
            <span className="ml-1.5 w-8 h-8 bg-white border border-[#2e2e2e]" />
            <span className="ml-1.5">未标题 -1</span>
          </div>
          <div className="h-6 mt-px flex items-center pl-1.5 bg-[#6a6a6a] text-white">
            <span className="w-3 h-3 border border-t-[#4a4a4a] border-l-[#4a4a4a] border-[#757575]" />
            <Icon size="w-4 h-4" box="0 0 16 16" className="mx-3 text-[#dedede]">
              <path d="M1.500 3.500V1.500h6v2h7v11h-13zM2 3.500h12" {...line} strokeWidth={1.200} />
              <path d="M4 6.500h8M4 8.500h8M4 10.500h8M4 12.500h8" {...line} strokeWidth={1} />
            </Icon>
            新建
          </div>
        </div>
        <div className="w-4 mt-1.5 bg-[#494949]" />
      </div>
      <div className="h-6 shrink-0 border-t border-[#3c3c3c] flex items-center justify-end gap-4 pr-6.5 text-[#d2d2d2]">
        <button aria-label="New document from state">
          <Icon size="w-4 h-4">
            <path d="M9 4h8v5h5v12H9v-4h4v-6H9zM18.500 3L22 7h-3.500z" />
            <path d="M6 9v12M0 15h12" {...line} strokeWidth={3} />
          </Icon>
        </button>
        <button aria-label="New snapshot">
          <Icon size="w-4 h-4">
            <path d="M2 7h5l2-3h6l2 3h5v13H2z" />
            <circle cx="12" cy="13" r="3.500" {...line} stroke="#535353" strokeWidth={2.500} />
          </Icon>
        </button>
        <button aria-label="Delete state" className="-ml-1">
          <Icon size="w-4 h-4">
            <Trash />
          </Icon>
        </button>
      </div>
    </section>
  );
}

const FILTERS = [
  {
    name: "Pixel layers",
    icon: (
      <>
        <path d="M3 5h18v14H3z" {...line} strokeWidth={2} />
        <path d="M5 17v-3l4-4 3 3 3-4 4 5v3z" />
      </>
    ),
  },
  {
    name: "Adjustment layers",
    icon: (
      <>
        <circle cx="12" cy="12" r="8.500" {...line} strokeWidth={2} />
        <path d="M18 6a8.500 8.500 0 01-12 12z" />
      </>
    ),
  },
  { name: "Type layers", icon: <path d="M3 4h18v5h-2l-1-2.500h-4V18h2.500v2h-9v-2H10V6.500H6L5 9H3z" /> },
  {
    name: "Shape layers",
    icon: (
      <>
        <path d="M5 5h14v14H5z" {...line} />
        <path d="M2.500 2.500h5v5h-5zM16.500 2.500h5v5h-5zM2.500 16.500h5v5h-5zM16.500 16.500h5v5h-5z" fill="#535353" stroke="currentColor" strokeWidth="1.500" />
      </>
    ),
  },
  {
    name: "Smart objects",
    icon: (
      <>
        <path d="M9 9V3h7l5 5v12h-7M15 3v6h6" {...line} strokeWidth={2} />
        <path d="M3 11h9v11H3z" />
      </>
    ),
  },
];

const Percent = ({ label }: { label: string }) => (
  <label className="flex items-center text-[#888]">
    <span>{label} :</span>
    <span className="ml-1 flex h-4.5 border border-[#636363] rounded-sm">
      <input defaultValue="100%" disabled className="w-9.5 pl-1" />
      <span className="w-3.5 border-l border-[#636363] flex items-center justify-center text-[#6f6f6f]">
        <Chevron />
      </span>
    </span>
  </label>
);

function LayersPanel() {
  return (
    <section className="mt-px flex-1 min-h-0 flex flex-col bg-[#535353] border-t border-[#383838]">
      <Tabs tabs={["图层", "通道", "路径"]} active="图层" menu="Layers menu" />
      <div className="h-8 shrink-0 flex items-center pl-1 pr-2.5 pt-1 text-[#9a9a9a]">
        <div className="relative flex items-center w-[86px] h-5.5 border border-[#616161] rounded-sm bg-[#4d4d4d]">
          <Icon size="w-3 h-3" box="0 0 12 12" className="absolute left-2 pointer-events-none">
            <circle cx="5" cy="5" r="3.500" {...line} strokeWidth={1.800} />
            <path d="M8 8l3.500 3" {...line} strokeWidth={2} />
          </Icon>
          <select aria-label="Filter kind" className="appearance-none w-full h-full pl-5.5">
            <option>类型</option>
          </select>
          <Chevron className="absolute right-0.5 text-[#6a6a6a] pointer-events-none" />
        </div>
        <div className="ml-4 flex-1 flex justify-between items-center">
          {FILTERS.map((f) => (
            <button key={f.name} aria-label={f.name}>
              <Icon size="w-3.5 h-3.5">{f.icon}</Icon>
            </button>
          ))}
          <button aria-label="Toggle filter" className="w-2.5 h-4.5 rounded-full bg-[#484848] ml-1 flex items-start">
            <span className="w-2.5 h-2 rounded-full bg-[#9c9c9c]" />
          </button>
        </div>
      </div>
      <div className="h-[29px] shrink-0 flex items-center pl-1 pr-2.5 border-y border-[#3f3f3f] text-[#8e8e8e] justify-between">
        <div className="relative w-[118px] flex items-center">
          <select aria-label="Blend mode" className="appearance-none w-full h-5.5 pl-2 border border-[#616161] rounded-sm">
            <option>正常</option>
          </select>
          <Chevron className="absolute right-1 text-[#6a6a6a] pointer-events-none" />
        </div>
        <Percent label="不透明度" />
      </div>
      <div className="h-[31px] shrink-0 flex items-center pl-1.5 pr-2.5 text-[#9a9a9a] pb-1">
        <span className="text-[#8e8e8e]">锁定 :</span>
        <div className="flex-1 flex justify-between items-center pl-1.5 pr-2">
          <button aria-label="Lock transparent pixels">
            <Icon size="w-3.5 h-3.5">
              <path d="M3 3h18v18H3z" {...line} strokeWidth={2} />
              <path d="M8 4h4v4H8zM16 4h4v4h-4zM4 8h4v4H4zM12 8h4v4h-4zM8 12h4v4H8zM16 12h4v4h-4zM4 16h4v4H4zM12 16h4v4h-4z" />
            </Icon>
          </button>
          <button aria-label="Lock image pixels">
            <Icon size="w-4 h-4">
              <Brush />
            </Icon>
          </button>
          <button aria-label="Lock position">
            <Icon size="w-4 h-4">
              <path d="M12 5v14M5 12h14" {...line} />
              <path d="M12 2l3.500 4.500h-7zM12 22l3.500-4.500h-7zM2 12l4.500-3.500v7zM22 12l-4.500-3.500v7z" />
            </Icon>
          </button>
          <button aria-label="Lock nesting">
            <Icon size="w-4 h-4">
              <path d="M5 1v22M1 6h16M1 20h22M19 9v14M17 6l3 3" {...line} strokeWidth={1.800} />
            </Icon>
          </button>
          <button aria-label="Lock all">
            <Icon size="w-3.5 h-3.5">
              <path d="M7 11V8a5 5 0 0110 0v3" {...line} strokeWidth={2.500} />
              <path d="M3 10h18v12H3z" />
              <circle cx="12" cy="16" r="2" fill="#535353" />
            </Icon>
          </button>
        </div>
        <Percent label="填充" />
      </div>
      <div className="flex-1 min-h-0 flex bg-[#4d4d4d]">
        <div className="flex-1">
          <div className="h-[41px] flex border-b border-[#404040]">
            <button aria-label="Layer visibility" className="w-[30px] flex items-center justify-center bg-[#535353] border-r border-[#404040] text-[#ededed]">
              <Icon size="w-3.5 h-3.5">
                <path d="M1 12c5-9 17-9 22 0-5 9-17 9-22 0z" />
                <circle cx="12" cy="12" r="4" {...line} stroke="#535353" strokeWidth={2} />
              </Icon>
            </button>
            <div className="flex-1 flex items-center bg-[#6a6a6a] pl-1 pr-3.5 text-white">
              <span className="w-8 h-8 bg-white border border-[#2e2e2e]" />
              <span className="ml-2.5">背景</span>
              <Icon size="w-3.5 h-3.5" className="ml-auto text-[#e0e0e0]">
                <path d="M7 10V8a5 5 0 0110 0v2M4 11h16v11H4z" {...line} strokeWidth={2} />
                <circle cx="12" cy="16" r="2" />
              </Icon>
            </div>
          </div>
        </div>
        <div className="w-4 bg-[#494949]" />
      </div>
      <div className="h-[26px] shrink-0 border-t border-[#3c3c3c] flex items-center justify-end gap-[11px] pr-6.5 text-[#dedede]">
        <button aria-label="Link layers" className="text-[#8a8a8a]">
          <Icon size="w-4 h-4">
            <path d="M10 8H6a4 4 0 000 8h4M14 8h4a4 4 0 010 8h-4M8 12h8" {...line} />
          </Icon>
        </button>
        <button aria-label="Layer style" className="text-[#a0a0a0]">
          <Icon size="w-4 h-4" box="0 0 16 16">
            <text x="2" y="12" fontSize="14" fontStyle="italic" fontFamily="Liberation Serif, serif">
              fx
            </text>
          </Icon>
        </button>
        <button aria-label="Layer mask">
          <Icon size="w-4 h-4">
            <path d="M2 4h20v16H2z" />
            <circle cx="12" cy="12" r="4.500" fill="#535353" />
          </Icon>
        </button>
        <button aria-label="New adjustment">
          <Icon size="w-4 h-4">
            <circle cx="11" cy="11" r="8" {...line} />
            <path d="M17 5a8 8 0 01-12 12zM17 20h6l-3 4z" />
          </Icon>
        </button>
        <button aria-label="New group">
          <Icon size="w-4 h-4">
            <path d="M3 3h8v2.500H3zM3 6.500h18V20H3z" />
          </Icon>
        </button>
        <button aria-label="New layer">
          <Icon size="w-4 h-4">
            <path d="M4 10V4h16v16h-6" {...line} strokeWidth={2} />
            <path d="M3 12h9v9z" />
          </Icon>
        </button>
        <button aria-label="Delete layer" className="text-[#8a8a8a]">
          <Icon size="w-4 h-4">
            <Trash />
          </Icon>
        </button>
      </div>
    </section>
  );
}

function Watermark() {
  return (
    <div className="absolute left-[982px] top-[617px] w-[236px] text-[#d2d2d2] pointer-events-none">
      <div className="flex items-end h-[74px]">
        <span className="font-['Liberation_Sans'] font-bold text-[51px] leading-[42px]">Bai</span>
        <div className="relative w-[68px] h-[74px] shrink-0">
          <Icon size="w-[68px] h-[74px]" box="0 0 68 74">
            <ellipse cx="9" cy="29" rx="8.500" ry="11" />
            <ellipse cx="25" cy="13" rx="8" ry="11.500" />
            <ellipse cx="46" cy="15" rx="8.500" ry="10.500" transform="rotate(8 46 15)" />
            <ellipse cx="58" cy="34" rx="8.500" ry="11" />
            <path d="M34 31c6 0 9 4 12 9 4 6 15 9 16 20 1 10-6 14-14 13-9-2-18-2-27 0-9 2-15-4-15-12 0-11 11-15 15-21 3-5 7-9 13-9z" />
          </Icon>
          <span className="absolute left-[14px] top-[38px] font-['Liberation_Sans'] font-bold text-[31px] leading-8 text-[#4d4d4d]">du</span>
        </div>
        <span className="font-black text-[38px] leading-[44px] whitespace-nowrap">经验</span>
      </div>
      <div className="font-['Open_Sans'] font-medium text-[27px] leading-9">jingyan.baidu.com</div>
    </div>
  );
}

export default function App() {
  return (
    <div className="relative h-screen overflow-hidden flex flex-col bg-[#535353] text-xs leading-4 font-['Open_Sans','Noto_Sans_CJK_SC',sans-serif] border-t border-l border-[#161616]">
      <MenuBar />
      <OptionsBar />
      <div className="flex-1 min-h-0 flex bg-[#484848]">
        <DocumentArea />
        <div className="w-[296px] shrink-0 flex flex-col border-r-3 border-black">
          <div className="h-3 shrink-0 bg-[#424242] flex items-center justify-between pl-6 pr-2 text-[#c4c4c4]">
            <DoubleChevron className="rotate-180" />
            <DoubleChevron />
          </div>
          <div className="flex-1 min-h-0 flex border-t border-[#383838] pb-1">
            <Dock />
            <div className="flex-1 min-w-0 flex flex-col border-x border-[#383838] mr-px">
              <HistoryPanel />
              <section className="mt-px pb-0.5 shrink-0 border-y border-[#383838] bg-[#535353]">
                <Tabs tabs={["画笔"]} active="画笔" menu="Brushes menu" />
              </section>
              <LayersPanel />
            </div>
          </div>
        </div>
      </div>

      <ToolBar />
      <ShapePicker />

      <svg viewBox="0 0 124 110" className="absolute left-[555px] top-[201px] w-[124px] h-[110px] pointer-events-none" aria-hidden="true">
        <path d="M6 103L85 33" stroke="#f00" strokeWidth="10" strokeLinecap="round" />
        <path d="M121 1L66 20l30 32z" fill="#f00" />
      </svg>

      <Watermark />

      {/* edges of windows that sit behind the app on the right */}
      <div className="absolute right-0 top-[134px] w-1 h-18 rounded-l bg-white" />
      <div className="absolute right-0 top-[338px] w-1 h-18 rounded-l bg-[#f0f8ff]" />
    </div>
  );
}
